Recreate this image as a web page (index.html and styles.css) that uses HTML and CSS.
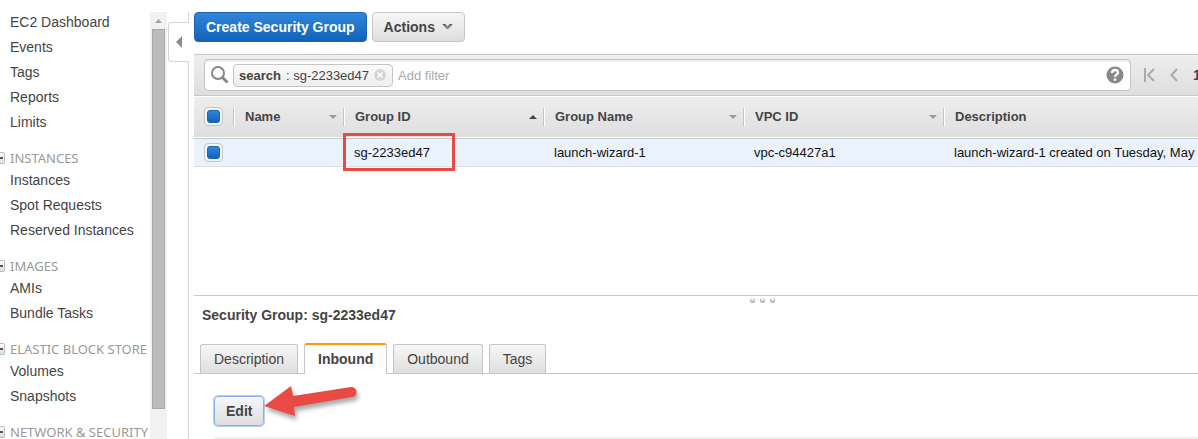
FILE: index.html
```html
<!DOCTYPE html>
<html lang="en">
<head>
    <meta charset="UTF-8">
    <meta name="viewport" content="width=device-width, initial-scale=1.0">
    <title>EC2 Management Console</title>
    <link rel="stylesheet" href="styles.css">
</head>
<body>
<nav class="sidebar">
    <ul>
        <li><a href="#">EC2 Dashboard</a></li>
        <li><a href="#">Events</a></li>
        <li><a href="#">Tags</a></li>
        <li><a href="#">Reports</a></li>
        <li><a href="#">Limits</a></li>
    </ul>
    <h3><button class="toggle" aria-label="Collapse Instances"></button>INSTANCES</h3>
    <ul>
        <li><a href="#">Instances</a></li>
        <li><a href="#">Spot Requests</a></li>
        <li><a href="#">Reserved Instances</a></li>
    </ul>
    <h3><button class="toggle" aria-label="Collapse Images"></button>IMAGES</h3>
    <ul>
        <li><a href="#">AMIs</a></li>
        <li><a href="#">Bundle Tasks</a></li>
    </ul>
    <h3><button class="toggle" aria-label="Collapse Elastic Block Store"></button>ELASTIC BLOCK STORE</h3>
    <ul>
        <li><a href="#">Volumes</a></li>
        <li><a href="#">Snapshots</a></li>
    </ul>
    <h3><button class="toggle" aria-label="Collapse Network &amp; Security"></button>NETWORK &amp; SECURITY</h3>
</nav>
<div class="scrollbar">
    <svg width="17" height="17" viewBox="0 0 17 17"><path d="M5 11h7L8.500 7z" fill="#a3a3a3"/></svg>
    <div class="thumb"></div>
</div>
<div class="rail">
    <button class="collapse" aria-label="Hide navigation">
        <svg width="7" height="12" viewBox="0 0 7 12"><path d="M6 0v12L0 6z" fill="#8c8c8c"/></svg>
    </button>
</div>

<main class="main">
    <div class="toolbar">
        <button class="btn primary">Create Security Group</button>
        <button class="btn">Actions
            <svg width="11" height="8" viewBox="0 0 11 8"><path d="M1 1.500h2l2.500 2 2.500-2h2L5.500 6z" fill="#aaa" stroke="#555"/></svg>
        </button>
    </div>

    <div class="filter-bar">
        <div class="search">
            <svg width="20" height="20" viewBox="0 0 20 20" fill="none" stroke="#888"><circle cx="8" cy="8" r="6" stroke-width="2"/><path d="M12.500 12.500l5 5" stroke-width="3"/></svg>
            <span class="chip"><b>search</b> : sg-2233ed47
                <button class="remove" aria-label="Remove filter">
                    <svg width="12" height="12" viewBox="0 0 12 12"><circle cx="6" cy="6" r="6" fill="#d6d6d6"/><path d="M3.500 3.500l5 5M8.500 3.500l-5 5" stroke="#fff" stroke-width="1.600"/></svg>
                </button>
            </span>
            <input type="text" placeholder="Add filter" aria-label="Add filter">
            <button class="help" aria-label="Help">
                <svg width="18" height="18" viewBox="0 0 18 18" fill="none"><circle cx="9" cy="9" r="8.500" fill="#888"/><path d="M6 7c0-4 6-4 6-.5C12 8.500 9 8.500 9 11" stroke="#fff" stroke-width="2.400"/><path d="M7.800 12.500h2.400v2.300H7.800z" fill="#fff"/></svg>
            </button>
        </div>
        <div class="pager">
            <button aria-label="First page"><svg width="11" height="14" viewBox="0 0 11 14" fill="none" stroke="#aaa" stroke-width="2"><path d="M1 0v14M10 1L4 7l6 6"/></svg></button>
            <button aria-label="Previous page"><svg width="8" height="14" viewBox="0 0 8 14" fill="none" stroke="#aaa" stroke-width="2"><path d="M7 1L1.500 7 7 13"/></svg></button>
            <b>1</b>
        </div>
    </div>

    <div class="list">
        <table>
            <thead>
                <tr>
                    <th class="check"><input type="checkbox" aria-label="Select all"></th>
                    <th class="name"><div>Name<i class="down"></i></div></th>
                    <th class="col"><div>Group ID<i class="up"></i></div></th>
                    <th class="col"><div>Group Name<i class="down"></i></div></th>
                    <th class="col"><div>VPC ID<i class="down"></i></div></th>
                    <th><div>Description</div></th>
                </tr>
            </thead>
            <tbody>
                <tr>
                    <td class="check"><input type="checkbox" aria-label="Select sg-2233ed47"></td>
                    <td></td>
                    <td class="marked">sg-2233ed47</td>
                    <td>launch-wizard-1</td>
                    <td>vpc-c94427a1</td>
                    <td>launch-wizard-1 created on Tuesday, May</td>
                </tr>
            </tbody>
        </table>
    </div>

    <section class="details">
        <div class="grip"><i></i><i></i><i></i></div>
        <h2>Security Group: sg-2233ed47</h2>
        <div class="tabs" role="tablist">
            <button role="tab">Description</button>
            <button role="tab" class="active" aria-selected="true">Inbound</button>
            <button role="tab">Outbound</button>
            <button role="tab">Tags</button>
        </div>
        <div class="panel">
            <button class="btn edit">Edit</button>
            <svg class="arrow" width="104" height="44" viewBox="0 0 104 44"><path d="M2 25L29 5l2 10 58-9a5 5 0 0 1 1 10L32 26l1 9z" fill="#ea4a44"/></svg>
        </div>
    </section>
</main>
</body>
</html>
```

FILE: styles.css
```css
*, *::before, *::after {
    margin: 0;
    padding: 0;
    box-sizing: border-box;
}
body {
    display: flex;
    height: 100vh;
    overflow: hidden;
    background: #fff;
    color: #444;
    font-family: "Liberation Sans", Arial, sans-serif;
    font-size: 14px;
}
button {
    font: inherit;
    color: inherit;
    border: 0;
    background: none;
    cursor: pointer;
}
svg {
    display: block;
    flex: none;
}

/* navigation */
.sidebar {
    width: 150px;
    flex: none;
    padding-top: 10px;
    overflow: hidden;
    white-space: nowrap;
}
.sidebar ul {
    list-style: none;
}
.sidebar a {
    display: block;
    padding-left: 10px;
    line-height: 25px;
    color: #444;
    text-decoration: none;
}
.sidebar h3 {
    display: flex;
    align-items: center;
    gap: 5px;
    padding-top: 13px;
    line-height: 20px;
    font-family: "Noto Sans", sans-serif;
    font-size: 13px;
    font-weight: 400;
    color: #999;
}
.toggle {
    display: flex;
    align-items: center;
    justify-content: flex-end;
    width: 5px;
    height: 12px;
    border: 1px solid #bbb;
    border-left: 0;
    border-radius: 0 2px 2px 0;
    background: linear-gradient(#fff, #ddd);
}
.toggle::before {
    content: "";
    width: 3px;
    height: 2px;
    margin-right: 1px;
    background: #555;
}
.scrollbar {
    display: flex;
    flex-direction: column;
    width: 17px;
    flex: none;
    margin-top: 12px;
    background: #f1f1f1;
}
.thumb {
    height: 89%;
    max-height: 380px;
    margin: 0 2px;
    border: 1px solid #a8a8a8;
    background: #bcbcbc;
}
.rail {
    width: 22px;
    flex: none;
    margin-top: 12px;
    padding: 10px 0 0 1px;
    border-right: 1px solid #d5d5d5;
}
.collapse {
    display: flex;
    align-items: center;
    justify-content: center;
    width: 21px;
    height: 40px;
    border: 1px solid #d5d5d5;
    border-right: 0;
    border-radius: 4px 0 0 4px;
    background: #fff;
}

/* content */
.main {
    display: flex;
    flex-direction: column;
    flex: 1;
    min-width: 0;
    margin-left: 5px;
    padding-top: 12px;
}
.toolbar {
    display: flex;
    gap: 5px;
    margin-bottom: 12px;
}
.btn {
    display: flex;
    align-items: center;
    gap: 7px;
    height: 30px;
    padding: 0 11px;
    border: 1px solid #c5c5c5;
    border-radius: 4px;
    background: linear-gradient(#f7f7f7, #dedede);
    font-weight: bold;
}
.primary {
    border-color: #1a63b0;
    background: linear-gradient(#2f86dd, #1263b8);
    color: #fff;
}
.filter-bar {
    display: flex;
    align-items: center;
    gap: 13px;
    height: 42px;
    padding-left: 10px;
    border-top: 1px solid #c8c8c8;
    border-bottom: 1px solid #c8c8c8;
    background: linear-gradient(#eee, #dedede);
}
.search {
    display: flex;
    align-items: center;
    flex: 1;
    height: 32px;
    padding: 0 6px 0 5px;
    border: 1px solid #c5c5c5;
    border-radius: 4px;
    background: #fff;
    box-shadow: inset 0 2px 2px #eee;
    font-size: 13px;
}
.chip {
    display: flex;
    align-items: center;
    gap: 5px;
    height: 23px;
    margin: 0 5px 0 3px;
    padding: 0 6px 0 5px;
    border: 1px solid #c5c5c5;
    border-radius: 4px;
    background: linear-gradient(#fafafa, #eee);
    white-space: nowrap;
}
.search input {
    flex: 1;
    min-width: 0;
    border: 0;
    outline: 0;
    background: none;
    font: inherit;
}
.search input::placeholder {
    color: #aaa;
}
.pager {
    display: flex;
    align-items: center;
    gap: 15px;
    width: 54px;
    overflow: hidden;
}

/* group list */
.list {
    flex: 1;
    min-height: 0;
    overflow: hidden;
}
table {
    width: 100%;
    table-layout: fixed;
    border-collapse: collapse;
    font-size: 13px;
    text-align: left;
}
thead tr {
    height: 42px;
    border-bottom: 1px solid #c8c8c8;
    background: linear-gradient(#fff 1px, #eee 1px, #dedede);
}
th.check {
    width: 39px;
}
th.name {
    width: 110px;
}
th.col {
    width: 200px;
}
th div {
    display: flex;
    align-items: center;
    justify-content: space-between;
    height: 18px;
    padding: 0 6px 0 11px;
    border-left: 1px solid #c5c5c5;
    box-shadow: inset 1px 0 #fff;
}
.down, .up {
    border: 4px solid transparent;
}
.down {
    border-top-color: #999;
    border-bottom: 0;
}
.up {
    border-bottom-color: #444;
    border-top: 0;
}
tbody tr {
    height: 28px;
    border-bottom: 1px solid #ddd;
    background: #eaf2fe;
    color: #111;
}
td {
    padding-left: 11px;
    white-space: nowrap;
}
.check {
    padding-left: 10px;
}
.check input {
    display: flex;
    appearance: none;
    width: 19px;
    height: 19px;
    padding: 2px;
    border: 1px solid #c5c5c5;
    border-radius: 4px;
    background: #f5f5f5;
}
.check input::before {
    content: "";
    flex: 1;
    border: 1px solid #1a63b0;
    border-radius: 3px;
    background: linear-gradient(#2f86dd, #1263b8);
}
.marked {
    position: relative;
}
.marked::after {
    content: "";
    position: absolute;
    top: -6px;
    left: 0;
    width: 112px;
    height: 38px;
    border: 3px solid #ea4a44;
}

/* selected group */
.details {
    border-top: 1px solid #c8c8c8;
}
.grip {
    display: flex;
    justify-content: center;
    gap: 5px;
    padding: 2px 0 2px 132px;
}
.grip i {
    width: 5px;
    height: 5px;
    border-radius: 50%;
    background: radial-gradient(circle at 50% 30%, #eee 1px, #b5b5b5 2px);
}
.details h2 {
    padding-left: 8px;
    line-height: 20px;
    font-size: 14px;
}
.tabs {
    display: flex;
    align-items: flex-end;
    gap: 6px;
    height: 49px;
    padding-left: 6px;
    border-bottom: 1px solid #c5c5c5;
}
.tabs button {
    height: 29px;
    padding: 0 13px;
    border: 1px solid #c5c5c5;
    border-bottom: 0;
    border-radius: 3px 3px 0 0;
    background: linear-gradient(#f7f7f7, #dedede);
}
.tabs .active {
    height: 31px;
    margin-bottom: -1px;
    padding-bottom: 2px;
    border-top: 2px solid #f90;
    background: #fff;
    font-weight: bold;
}
.panel {
    position: relative;
    height: 65px;
    margin-left: 20px;
    padding-top: 22px;
    border-bottom: 2px solid #eee;
}
.edit {
    height: 30px;
    border-color: #8ab0ea;
    box-shadow: 0 0 0 1px #b5cff5;
}
.arrow {
    position: absolute;
    top: 7px;
    left: 48px;
    filter: drop-shadow(2px 4px 2px #0005);
}
```
